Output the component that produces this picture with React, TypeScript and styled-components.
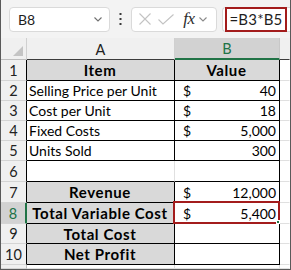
import React from "react";
import styled, { createGlobalStyle, css } from "styled-components";

const GlobalStyle = createGlobalStyle`
  html, body { margin: 0; padding: 0; background: #ffffff; }
  * { box-sizing: border-box; }
`;

const FONT = `Lato, "Liberation Sans", sans-serif`;
const GREEN = "#217346";
const RED = "#a31c1c";

const Frame = styled.div`
  width: 291px;
  height: 270px;
  border: 1px solid #5a5a5a;
  border-top: none;
  overflow: hidden;
  font-family: ${FONT};
  background: #fff;
  display: flex;
  flex-direction: column;
`;

const Toolbar = styled.div`
  height: 38px;
  flex: none;
  background: #f3f3f3;
  display: flex;
  align-items: center;
  padding-left: 8px;
`;

const Box = styled.div`
  height: 25px;
  background: #fff;
  border: 1px solid #dadada;
  border-radius: 4px;
  display: flex;
  align-items: center;
`;

const NameBox = styled(Box)`
  width: 101px;
  padding: 0 7px 0 8px;
  justify-content: space-between;
  font-size: 14px;
  color: #1e1e1e;
`;

const Dots = styled.div`
  width: 21px;
  display: flex;
  justify-content: center;
`;

const FxBox = styled(Box)`
  width: 86px;
  padding-left: 6px;
`;

const IconSlot = styled.span<{ $w: number }>`
  width: ${(p) => p.$w}px;
  display: flex;
  justify-content: center;
  align-items: center;
`;

const Fx = styled.span`
  font-family: "Liberation Serif", serif;
  font-style: italic;
  font-size: 17px;
  color: #2b2b2b;
  letter-spacing: -0.5px;
`;

const FormulaBox = styled(Box)`
  flex: 1;
  margin-left: 5px;
  border-right: none;
  border-radius: 4px 0 0 4px;
  padding-left: 2px;
`;

const FormulaText = styled.div`
  height: 25px;
  width: 62px;
  border: 2px solid ${RED};
  font-size: 15px;
  color: #1e1e1e;
  display: flex;
  align-items: center;
  justify-content: center;
  letter-spacing: 0.2px;
`;

const Sheet = styled.div`
  flex: 1;
  display: grid;
  grid-template-columns: 26px 148px 105px 1fr;
  grid-template-rows: 22px 21px 20px 20px 20px 20px 21px 21px 21px 20px 21px 1fr;
  font-size: 14px;
  color: #000;
`;

const Corner = styled.div`
  background: #f0f0f0;
  border-right: 1px solid #d0d0d0;
  border-bottom: 1px solid #bdbdbd;
  position: relative;
`;

const Triangle = styled.div`
  position: absolute;
  right: 3px;
  bottom: 3px;
  width: 0;
  height: 0;
  border-left: 10px solid transparent;
  border-bottom: 10px solid #c4c4c4;
`;

const ColHead = styled.div<{ $sel?: boolean; $edge?: string }>`
  background: ${(p) => (p.$sel ? "#d2d2d2" : "#f0f0f0")};
  color: ${(p) => (p.$sel ? GREEN : "#222")};
  border-right: 1px solid ${(p) => p.$edge || "#d0d0d0"};
  border-bottom: ${(p) => (p.$sel ? `2px solid ${GREEN}` : "1px solid #3c3c3c")};
  display: flex;
  align-items: center;
  justify-content: center;
  font-size: 14.5px;
  padding-top: 1px;
`;

const RowHead = styled.div<{ $sel?: boolean; $dark?: boolean }>`
  background: ${(p) => (p.$sel ? "#d2d2d2" : "#f0f0f0")};
  color: ${(p) => (p.$sel ? GREEN : "#222")};
  border-right: ${(p) =>
    p.$sel ? `2px solid ${GREEN}` : `1px solid ${p.$dark ? "#000" : "#bdbdbd"}`};
  border-bottom: 1px solid #d4d4d4;
  display: flex;
  align-items: center;
  justify-content: center;
  font-size: 14.5px;
`;

const Cell = styled.div<{
  $bg?: string;
  $bold?: boolean;
  $center?: boolean;
  $r?: string;
  $b?: string;
}>`
  background: ${(p) => p.$bg || "#fff"};
  border-right: 1px solid ${(p) => p.$r || "#000"};
  border-bottom: 1px solid ${(p) => p.$b || "#000"};
  display: flex;
  align-items: center;
  padding: 0 3px 0 2px;
  white-space: nowrap;
  position: relative;
  ${(p) =>
    p.$bold &&
    css`
      font-weight: 700;
      font-size: 15px;
      letter-spacing: 0.6px;
    `}
  ${(p) =>
    p.$center &&
    css`
      justify-content: center;
    `}
`;

const Dollar = styled.span`
  margin-left: 6px;
  flex: 1;
`;

const Num = styled.span`
  margin-left: auto;
`;

const Selection = styled.div`
  position: absolute;
  top: -2px;
  left: -2px;
  right: -1px;
  bottom: -1px;
  border: 2px solid ${RED};
  pointer-events: none;
`;

const Handle = styled.div`
  position: absolute;
  right: -2px;
  bottom: -2px;
  width: 4px;
  height: 4px;
  background: ${GREEN};
  border: 1px solid #fff;
`;

const Chevron = ({ w = 8, color = "#707070" }: { w?: number; color?: string }) => (
  <svg width={w} height={w / 2 + 1} viewBox="0 0 8 5" fill="none">
    <path d="M0.5 0.5 L4 4 L7.5 0.5" stroke={color} strokeWidth="1.1" />
  </svg>
);

type Row = {
  n: number;
  a?: string;
  aBold?: boolean;
  aBg?: string;
  aCenter?: boolean;
  dollar?: boolean;
  val?: string;
  bBold?: boolean;
  bBg?: string;
  bCenter?: boolean;
  aRight?: string;
};

const rows: Row[] = [
  { n: 1, a: "Item", aBold: true, aBg: "#d9d9d9", aCenter: true, val: "Value", bBold: true, bBg: "#d9d9d9", bCenter: true },
  { n: 2, a: "Selling Price per Unit", dollar: true, val: "40" },
  { n: 3, a: "Cost per Unit", dollar: true, val: "18" },
  { n: 4, a: "Fixed Costs", dollar: true, val: "5,000" },
  { n: 5, a: "Units Sold", val: "300" },
  { n: 6, aRight: "#e0e0e0" },
  { n: 7, a: "Revenue", aBold: true, aBg: "#d9d9d9", aCenter: true, dollar: true, val: "12,000" },
  { n: 8, a: "Total Variable Cost", aBold: true, aBg: "#d9d9d9", aCenter: true, dollar: true, val: "5,400" },
  { n: 9, a: "Total Cost", aBold: true, aBg: "#d9d9d9", aCenter: true },
  { n: 10, a: "Net Profit", aBold: true, aBg: "#d9d9d9", aCenter: true },
];

export default function App() {
  return (
    <>
      <GlobalStyle />
      <Frame>
        <Toolbar>
          <NameBox>
            <span>B8</span>
            <Chevron />
          </NameBox>
          <Dots>
            <svg width="3" height="12" viewBox="0 0 3 12">
              <rect x="0.5" y="0" width="2" height="2" fill="#3a3a3a" />
              <rect x="0.5" y="5" width="2" height="2" fill="#3a3a3a" />
              <rect x="0.5" y="10" width="2" height="2" fill="#3a3a3a" />
            </svg>
          </Dots>
          <FxBox>
            <IconSlot $w={14}>
              <svg width="12" height="12" viewBox="0 0 12 12">
                <path d="M0.5 0.5 L11.5 11.5 M11.5 0.5 L0.5 11.5" stroke="#c3c3c3" strokeWidth="1.1" />
              </svg>
            </IconSlot>
            <IconSlot $w={28}>
              <svg width="16" height="11" viewBox="0 0 16 11">
                <path d="M0.5 5.5 L5 10 L15.5 0.5" stroke="#c3c3c3" strokeWidth="1.1" fill="none" />
              </svg>
            </IconSlot>
            <IconSlot $w={18}>
              <Fx>fx</Fx>
            </IconSlot>
            <IconSlot $w={10}>
              <Chevron w={8} color="#8a8a8a" />
            </IconSlot>
          </FxBox>
          <FormulaBox>
            <FormulaText>=B3*B5</FormulaText>
          </FormulaBox>
        </Toolbar>
        <Sheet>
          <Corner>
            <Triangle />
          </Corner>
          <ColHead>A</ColHead>
          <ColHead $sel $edge="#c8c8c8">B</ColHead>
          <ColHead $edge="transparent" />
          {rows.map((r) => (
            <React.Fragment key={r.n}>
              <RowHead $sel={r.n === 8} $dark>
                {r.n}
              </RowHead>
              <Cell $bg={r.aBg} $bold={r.aBold} $center={r.aCenter} $r={r.aRight}>
                {r.a}
              </Cell>
              <Cell $bg={r.bBg} $bold={r.bBold} $center={r.bCenter}>
                {r.bCenter ? (
                  r.val
                ) : (
                  <>
                    {r.dollar && <Dollar>$</Dollar>}
                    {r.val && <Num>{r.val}</Num>}
                  </>
                )}
                {r.n === 8 && (
                  <Selection>
                    <Handle />
                  </Selection>
                )}
              </Cell>
              <Cell $r="transparent" $b="#e0e0e0" />
            </React.Fragment>
          ))}
          <RowHead />
          <Cell $r="#e0e0e0" $b="#e0e0e0" />
          <Cell $r="#e0e0e0" $b="#e0e0e0" />
          <Cell $r="transparent" $b="#e0e0e0" />
        </Sheet>
      </Frame>
    </>
  );
}
